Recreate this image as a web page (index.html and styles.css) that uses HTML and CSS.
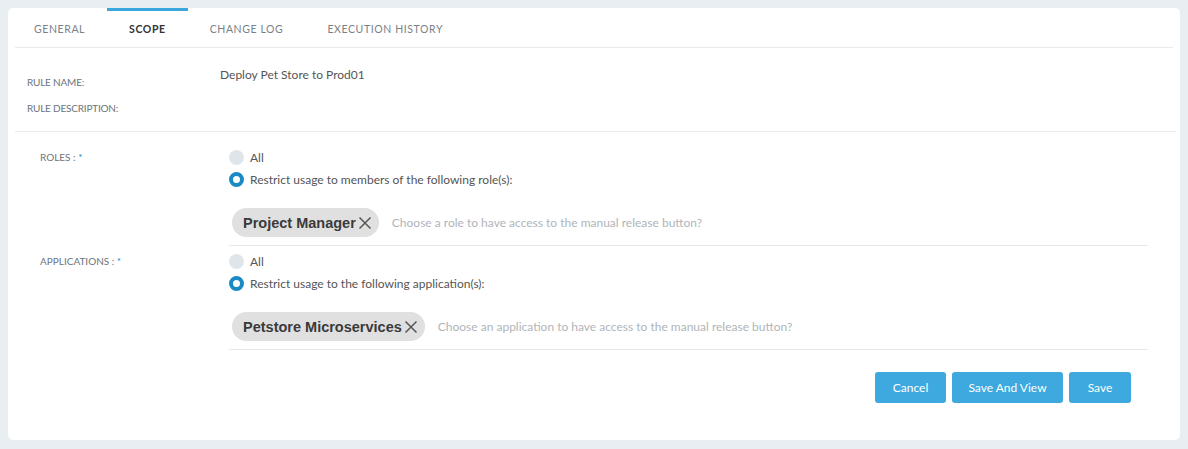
FILE: index.html
```html
<!DOCTYPE html>
<html>
<head>
<meta charset="utf-8">
<link rel="stylesheet" href="styles.css">
</head>
<body>
<div class="card">
  <div class="tabs">
    <div class="tab">GENERAL</div>
    <div class="tab active">SCOPE</div>
    <div class="tab">CHANGE LOG</div>
    <div class="tab">EXECUTION HISTORY</div>
  </div>
  <div class="info">
    <div class="info-labels">
      <div class="info-label">RULE NAME:</div>
      <div class="info-label">RULE DESCRIPTION:</div>
    </div>
    <div class="info-value">Deploy Pet Store to Prod01</div>
  </div>
  <div class="scope">
    <div class="field">
      <div class="field-label">ROLES : <span class="req">*</span></div>
      <div class="field-body">
        <div class="radio"><span class="dot"></span>All</div>
        <div class="radio"><span class="dot on"></span>Restrict usage to members of the following role(s):</div>
        <div class="picker">
          <span class="chip">Project Manager<svg class="x" viewBox="0 0 16 16" width="16" height="16"><path d="M2.5 2.5 L13.5 13.5 M13.5 2.5 L2.5 13.5" stroke="#555" stroke-width="1.5" fill="none"/></svg></span>
          <span class="placeholder">Choose a role to have access to the manual release button?</span>
        </div>
      </div>
    </div>
    <div class="field">
      <div class="field-label">APPLICATIONS : <span class="req">*</span></div>
      <div class="field-body">
        <div class="radio"><span class="dot"></span>All</div>
        <div class="radio"><span class="dot on"></span>Restrict usage to the following application(s):</div>
        <div class="picker">
          <span class="chip">Petstore Microservices<svg class="x" viewBox="0 0 16 16" width="16" height="16"><path d="M2.5 2.5 L13.5 13.5 M13.5 2.5 L2.5 13.5" stroke="#555" stroke-width="1.5" fill="none"/></svg></span>
          <span class="placeholder">Choose an application to have access to the manual release button?</span>
        </div>
      </div>
    </div>
    <div class="actions">
      <button class="btn w-cancel">Cancel</button>
      <button class="btn w-sav">Save And View</button>
      <button class="btn w-save">Save</button>
    </div>
  </div>
</div>
</body>
</html>
```
FILE: styles.css
```css
html, body {
  margin: 0;
  padding: 0;
}
body {
  background: #e8eef1;
  padding: 8px;
  font-family: Lato, "Noto Sans", sans-serif;
  color: #555;
}
.card {
  background: #fff;
  border-radius: 5px;
  width: 1172px;
  height: 432px;
  box-sizing: border-box;
}
.tabs {
  display: flex;
  margin: 0 7px;
  height: 40px;
  border-bottom: 1px solid #e8ebed;
  box-sizing: border-box;
}
.tab {
  padding: 0 22px;
  height: 39px;
  line-height: 37px;
  font-size: 10.5px;
  letter-spacing: 0.6px;
  color: #7a8288;
  box-sizing: border-box;
  border-top: 3px solid transparent;
}
.tab:first-child {
  margin-left: -3px;
}
.tab.active {
  border-top-color: #3aa8dc;
  color: #333;
  font-weight: 700;
}
.info {
  display: flex;
  margin: 0 4px 0 7px;
  height: 84px;
  border-bottom: 1px solid #e8ebed;
  box-sizing: border-box;
}
.info-labels {
  width: 205px;
  padding: 26px 0 0 12px;
  box-sizing: border-box;
}
.info-label {
  font-size: 10px;
  letter-spacing: -0.2px;
  color: #6b757d;
  height: 26px;
  line-height: 16px;
}
.info-value {
  padding-top: 19px;
  line-height: 16px;
  font-size: 12px;
  color: #555;
}
.scope {
  padding-top: 10px;
}
.field {
  display: flex;
}
.field-label {
  width: 221px;
  padding: 9px 0 0 32px;
  line-height: 12px;
  box-sizing: border-box;
  font-size: 10px;
  color: #6b757d;
}
.req {
  color: #1a8ac4;
}
.field-body {
  width: 919px;
  padding-top: 4px;
  border-bottom: 1px solid #e6e9eb;
}
.radio {
  display: flex;
  align-items: center;
  height: 22px;
  font-size: 12px;
  color: #555;
}
.dot {
  width: 15px;
  height: 15px;
  border-radius: 50%;
  background: #dfe5e9;
  margin-right: 6px;
  box-sizing: border-box;
}
.dot.on {
  background: #fff;
  border: 4.5px solid #1a8ac4;
}
.picker {
  display: flex;
  align-items: center;
  padding: 18px 0 8px 3px;
}
.chip {
  display: inline-flex;
  align-items: center;
  height: 29px;
  padding: 0 6px 0 11px;
  border-radius: 15px;
  background: #e0e0e0;
  font-family: "Liberation Sans", Arial, sans-serif;
  font-weight: 700;
  font-size: 14.5px;
  color: #3a3a3a;
}
.x {
  margin-left: 1px;
}
.placeholder {
  margin-left: 13px;
  font-size: 12px;
  color: #b0b5b9;
}
.actions {
  display: flex;
  justify-content: flex-end;
  gap: 6px;
  padding: 22px 49px 0 0;
}
.btn {
  height: 31px;
  border: 0;
  border-radius: 3px;
  background: #3ea9de;
  color: #fff;
  font-family: Lato, "Noto Sans", sans-serif;
  font-size: 12px;
  padding: 0;
}
.w-cancel { width: 71px; }
.w-sav { width: 111px; }
.w-save { width: 62px; }
```
